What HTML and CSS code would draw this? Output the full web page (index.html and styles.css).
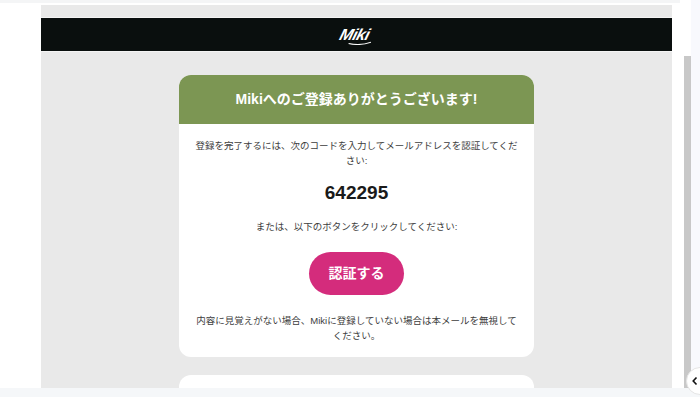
FILE: index.html
```html
<!DOCTYPE html>
<html lang="ja">
<head>
<meta charset="utf-8">
<title>Miki</title>
<link rel="stylesheet" href="styles.css">
</head>
<body>
<div class="app">
  <div class="viewer">
    <div class="topline"></div>
    <div class="viewer-row">
      <main class="mail">
        <header class="brand">
          <span class="logo">Miki<svg class="swash" viewBox="0 0 24 5" aria-hidden="true"><path d="M1 3.4 C8 5 17 4.6 23 2.2" /></svg></span>
        </header>
        <section class="card">
          <h1 class="card-title">Mikiへのご登録ありがとうございます!</h1>
          <div class="card-body">
            <p class="note">登録を完了するには、次のコードを入力してメールアドレスを認証してください:</p>
            <p class="code">642295</p>
            <p class="note or">または、以下のボタンをクリックしてください:</p>
            <a class="verify" href="#">認証する</a>
            <p class="note last">内容に見覚えがない場合、Mikiに登録していない場合は本メールを無視してください。</p>
          </div>
        </section>
        <section class="card next"></section>
      </main>
      <div class="track"><div class="thumb"></div></div>
    </div>
  </div>
  <aside class="side"></aside>
</div>
<div class="bottombar"></div>
<button class="collapse" aria-label="閉じる">
  <svg viewBox="0 0 8 10" aria-hidden="true"><path d="M5.5 1.5 L2.2 5 L5.5 8.5" /></svg>
</button>
</body>
</html>
```
FILE: styles.css
```css
* { box-sizing: border-box; }
html, body { margin: 0; height: 100%; overflow: hidden; }
body {
  background: #fff;
  font-family: "Liberation Sans", "Noto Sans CJK JP", sans-serif;
  position: relative;
}
.app { display: flex; height: 388px; overflow: hidden; }
.viewer { width: 691px; flex: none; display: flex; flex-direction: column; }
.topline { height: 3px; width: 680px; background: #f4f5f6; flex: none; }
.viewer-row { flex: 1; display: flex; min-height: 0; padding-left: 41px; padding-top: 2px; }
.mail {
  width: 631px;
  flex: none;
  background: #e9e9e9;
  padding-top: 13px;
  overflow: hidden;
}
.brand {
  height: 33px;
  background: #0a0f0e;
  display: flex;
  align-items: center;
  justify-content: center;
  box-shadow: 0 0 0 1px #f4f4f4;
}
.logo {
  color: #fff;
  font-family: "Liberation Sans", sans-serif;
  font-style: italic;
  font-weight: 700;
  font-size: 16px;
  line-height: 1;
  letter-spacing: -0.5px;
  transform: translateX(-2px) skewX(-16deg);
  position: relative;
}
.swash {
  position: absolute;
  left: 10px;
  bottom: -2px;
  width: 24px;
  height: 5px;
  fill: none;
  stroke: #fff;
  stroke-width: 1;
}
.card {
  width: 355px;
  margin: 24px auto 0;
  background: #fff;
  border-radius: 12px;
  overflow: hidden;
}
.card-title {
  margin: 0;
  height: 49px;
  background: #7c9653;
  color: #fff;
  font-size: 14px;
  font-weight: 700;
  line-height: 49px;
  text-align: center;
}
.card-body {
  height: 233px;
  padding: 14px 16px 0;
  display: flex;
  flex-direction: column;
  align-items: center;
}
.note {
  margin: 0;
  color: #3d3d3d;
  font-size: 9.5px;
  line-height: 15px;
  text-align: center;
}
.code {
  margin: 13px 0 0;
  color: #1a1a1a;
  font-size: 19px;
  font-weight: 700;
  line-height: 24px;
}
.or { margin-top: 14px; }
.verify {
  margin-top: 18px;
  width: 95px;
  height: 43px;
  border-radius: 22px;
  background: #d42c7c;
  color: #fff;
  font-size: 14px;
  font-weight: 700;
  line-height: 43px;
  text-align: center;
  text-decoration: none;
}
.last { margin-top: 18px; }
.next { height: 60px; margin-top: 18px; }
.track { width: 7px; margin-left: 12px; padding-top: 51px; flex: none; }
.thumb { height: 340px; background: #c8c8c8; }
.side { flex: 1; background: #f8f9fd; }
.bottombar { height: 9px; background: #f5f7f9; }
.collapse {
  position: absolute;
  left: 686px;
  top: 367px;
  width: 28px;
  height: 28px;
  padding: 0 0 0 4px;
  border: 1px solid #e4e4e4;
  border-radius: 50%;
  background: #fff;
  display: flex;
  align-items: center;
}
.collapse svg { width: 8px; height: 10px; fill: none; stroke: #111; stroke-width: 1.6; }
```
